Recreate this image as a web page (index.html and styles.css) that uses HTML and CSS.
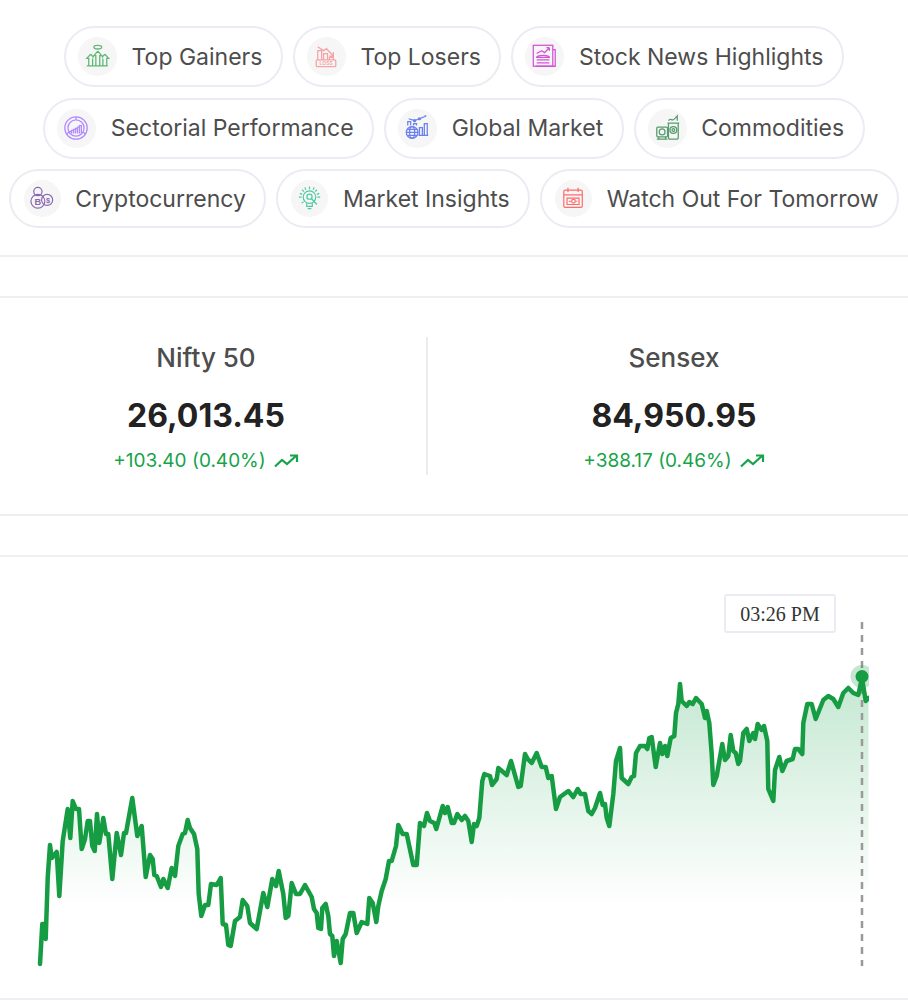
FILE: index.html
```html
<!DOCTYPE html>
<html lang="en">
<head>
<meta charset="utf-8">
<title>Market Overview</title>
<link rel="stylesheet" href="styles.css">
</head>
<body>
<main class="page">
  <nav class="chips">
    <a class="chip"><span class="chip-icon"><svg class="ico ico-gainers" viewBox="0 0 40 40"><ellipse cx="20.3" cy="10.500" rx="4" ry="1.800"/><path d="M9 29.500h21.500M20.300 14.500l-4 4.500h2v10.500M20.300 14.500l4 4.500h-2v10.500M13 17.500l-4 4.500h2v7.500M13 17.500l3 3.500M15 22v7.500M27.500 17.500l4 4.500h-2v7.500M27.500 17.500l-3 3.500M25.500 22v7.500"/></svg></span><span class="chip-label">Top Gainers</span></a>
    <a class="chip"><span class="chip-icon"><svg class="ico ico-losers" viewBox="0 0 40 40"><rect x="9.500" y="23.500" width="20" height="7" rx="1"/><path d="M11 23.500V14h4v9.500M17 23.500V17h4v6.500M23 23.500V21h4v2.500M11 10l6 4 3-2 7 7.500M27 15.500v4h-4"/><text class="ico-text" x="19.500" y="29">LOSS</text></svg></span><span class="chip-label">Top Losers</span></a>
    <a class="chip"><span class="chip-icon"><svg class="ico ico-news" viewBox="0 0 40 40"><rect x="8.500" y="8.500" width="20" height="21.500"/><path d="M28.500 13H31v17H11M12 17l5-3 3 2 5-5M25 11v3M22 11h3M12 21c0-3 13-3 13 0zM12 23.500h13M12 26.500h13"/></svg></span><span class="chip-label">Stock News Highlights</span></a>
    <a class="chip"><span class="chip-icon"><svg class="ico ico-sector" viewBox="0 0 40 40"><circle cx="19.500" cy="19.500" r="11.500"/><circle cx="19.500" cy="19.500" r="8.300"/><path d="M19.500 8v3M9.500 25.500l2.800-1.600M29.500 25.500l-2.800-1.600M13 25v-2h2v2M15 25v-3h2v3M17 25v-4h2v4M19 25v-5h2v5M21 25v-6.500h2v6.500M23 25v-8h2v8"/></svg></span><span class="chip-label">Sectorial Performance</span></a>
    <a class="chip"><span class="chip-icon"><svg class="ico ico-global" viewBox="0 0 40 40"><circle cx="14.500" cy="24" r="6"/><ellipse cx="14.500" cy="24" rx="2.600" ry="6"/><path d="M8.500 24h12M9.500 21h10M9.500 27h10M10 17v-4h3v4M16 17v-2h3v2M22 27v-8h3v8h-3M27 27V15h3v12h-3M21 27h10M11 10l6 2 5-2 7-3M29 7l-2 .2"/><circle cx="17" cy="12" r="1"/><circle cx="22" cy="10" r="1"/></svg></span><span class="chip-label">Global Market</span></a>
    <a class="chip"><span class="chip-icon"><svg class="ico ico-commod" viewBox="0 0 40 40"><rect x="9" y="18.500" width="11" height="10" rx="1"/><circle cx="14.500" cy="23.500" r="3"/><path d="M9 31h11M11 28.500v2.500M18 28.500v2.500M20 14.500h12M21 14.500v15a1.500 1.500 0 0 0 1.500 1.500h7a1.500 1.500 0 0 0 1.500-1.500v-15M21 12c2-3 3 0 5-1s3-3 4-4v5"/><circle cx="26" cy="21.500" r="3.500"/><circle cx="26" cy="21.500" r="1.400"/></svg></span><span class="chip-label">Commodities</span></a>
    <a class="chip chip-sm"><span class="chip-icon"><svg class="ico ico-crypto" viewBox="0 0 40 40"><circle cx="15" cy="12.500" r="4.500"/><circle cx="25" cy="21.500" r="6"/><circle cx="15" cy="23" r="7.500"/><text class="ico-text ico-text-lg" x="15" y="26.500">B</text><text class="ico-text ico-text-md" x="26" y="24.500">$</text></svg></span><span class="chip-label">Cryptocurrency</span></a>
    <a class="chip chip-sm"><span class="chip-icon"><svg class="ico ico-insight" viewBox="0 0 40 40"><circle cx="20" cy="18.500" r="6.800"/><circle cx="20" cy="18" r="2.800"/><path d="M17 25v3.500h6V25M18 31h4M22 20l6 6.500M20 7v3M15 8l1 2.500M25 8l-1 2.500M12 10.500l2 2M28 10.500l-2 2M9.500 14.500l2.500 1M30.500 14.500l-2.500 1M8.500 18.500h3M31.500 18.500h-3M11.500 25l2-1.500"/></svg></span><span class="chip-label">Market Insights</span></a>
    <a class="chip chip-sm"><span class="chip-icon"><svg class="ico ico-watch" viewBox="0 0 40 40"><rect x="9.500" y="11" width="20" height="18.500" rx="1.500"/><path d="M9.500 16h20M14 8.500V13M25 8.500V13M13 19.500h13v7H13z"/><circle cx="20" cy="23" r="2"/><path d="M15 23h2M23 23h1"/></svg></span><span class="chip-label">Watch Out For Tomorrow</span></a>
  </nav>

  <div class="spacer"></div>

  <section class="stats">
    <article class="stat stat-left">
      <h2 class="stat-name">Nifty 50</h2>
      <p class="stat-value">26,013.45</p>
      <p class="stat-change">+103.40 (0.40%)<svg class="trend" viewBox="0 0 25 14"><path d="M1 12.500l7-6.500 5 4 9.500-8.500M16 1.500h7v6.500"/></svg></p>
    </article>
    <article class="stat stat-right">
      <h2 class="stat-name">Sensex</h2>
      <p class="stat-value">84,950.95</p>
      <p class="stat-change">+388.17 (0.46%)<svg class="trend" viewBox="0 0 25 14"><path d="M1 12.500l7-6.500 5 4 9.500-8.500M16 1.500h7v6.500"/></svg></p>
    </article>
  </section>

  <div class="spacer"></div>

  <section class="chart">
    <svg class="plot" viewBox="0 556 908 441" aria-hidden="true">
      <defs>
        <linearGradient id="area" gradientUnits="userSpaceOnUse" x1="0" y1="680" x2="0" y2="905">
          <stop offset="0" stop-color="#16a34a" stop-opacity=".25"/>
          <stop offset="1" stop-color="#16a34a" stop-opacity="0"/>
        </linearGradient>
        <clipPath id="plotclip"><rect x="0" y="556" width="869" height="441"/></clipPath>
      </defs>
      <g clip-path="url(#plotclip)">
        <path class="area" d="M40 963L42.300 923 44 923 45.700 938 47.700 877 50 844 51.700 857 56.700 851 59.300 895 62.700 840 67.700 808 70.300 837 72.700 800 76 808 79 808 81.700 848 85 838 87.700 820 90 820 92.300 845 94.700 850 97 813 99.300 842 103.300 817 106 833 108.300 833 112.300 878 116.700 832 121 854 124 832 126 832 132.300 797 137.300 835 141.700 825 145.700 876 150 854 152.700 858 154.300 874 156.700 875 161 886 163.300 878 167.700 887 171.700 867 175 875 178.300 845 182.700 833 185 832 187.700 819 190 827 194 833 197.300 848 198.700 893 201.300 915 205 904 208.300 904 211 883 216.700 884 220.700 877 222.700 923 226 924 228.300 944 230.700 945 235 920 240 916 242.700 899 247.300 905 250 922 256.700 928 263.300 892 267.300 906 272.300 878 276 885 278.700 870 283.300 893 285.700 917 288.300 915 291.700 882 296 893 300 893 305 884 311.700 896 314 908 316.700 912 318.300 927 321 928 322.300 907 325.700 903 328.300 915 330 933 332.300 935 334 955 336.700 940 340.700 962 342.700 938 345.700 933 350 912 353.300 912 356.700 932 361.700 921 367.300 923 369.300 897 372.700 902 376.300 921 378.300 905 381.700 890 385.700 878 389 860 391.700 860 396 845 398.300 824 402.700 833 406.700 833 413.300 864 416.700 864 420 822 424 825 427 812 430 820 434.300 822 436.300 828 442.700 805 445 812 447.700 806 451.700 822 454 822 457.300 813 461.700 819 465 815 468.300 820 471.700 841 474 823 476.700 825 479.300 817 482.300 780 484.300 773 490 775 492 784 496.700 778 498.300 767 506.700 774 511 760 518.300 786 520.700 785 525 753 527.700 758 531.700 762 536.700 752 541.700 766 545.700 766 548.300 777 551.700 775 556 808 560 796 568.300 790 573.300 796 577.700 788 580.700 793 585 793 588.300 810 591.700 813 595 807 600 792 602.700 804 605 803 606.700 817 609.300 825 613.300 793 616 760 620 747 621.700 777 628.300 783 631.700 776 634 775 636 752 640 745 645 745 647.300 748 649.300 737 651.700 736 655.700 766 660 742 662.300 753 665 745 667.300 755 670.700 737 674.300 735 676 712 678.300 703 680 683 681.700 700 686.700 705 689.300 701 692.700 703 696 697 701.700 703 705 717 706.700 710 709.300 722 711.700 753 713.300 784 716.700 775 722.300 743 725 759 728.300 755 730.700 734 733.300 750 735.700 752 738.300 763 740 760 743.300 732 746.700 728 749.300 740 753.300 732 755 738 757.700 723 761.700 729 764 725 767.300 740 768.300 788 773.300 800 775 769 779.300 756 782.300 770 786.700 760 792.700 758 795 748 798.300 748 802.300 753 803.300 722 807.300 703 811.700 703 815.700 718 823.300 699 828.300 695 833.300 698 838.300 706 843.300 692 848.300 687 853.300 692 858.300 694 862 677 865.700 700 868.500 697V965H40Z"/>
        <line class="cursor" x1="862" y1="621" x2="862" y2="965"/>
        <circle class="halo" cx="862" cy="675.500" r="11.500"/>
        <path class="line" d="M40 963L42.300 923 44 923 45.700 938 47.700 877 50 844 51.700 857 56.700 851 59.300 895 62.700 840 67.700 808 70.300 837 72.700 800 76 808 79 808 81.700 848 85 838 87.700 820 90 820 92.300 845 94.700 850 97 813 99.300 842 103.300 817 106 833 108.300 833 112.300 878 116.700 832 121 854 124 832 126 832 132.300 797 137.300 835 141.700 825 145.700 876 150 854 152.700 858 154.300 874 156.700 875 161 886 163.300 878 167.700 887 171.700 867 175 875 178.300 845 182.700 833 185 832 187.700 819 190 827 194 833 197.300 848 198.700 893 201.300 915 205 904 208.300 904 211 883 216.700 884 220.700 877 222.700 923 226 924 228.300 944 230.700 945 235 920 240 916 242.700 899 247.300 905 250 922 256.700 928 263.300 892 267.300 906 272.300 878 276 885 278.700 870 283.300 893 285.700 917 288.300 915 291.700 882 296 893 300 893 305 884 311.700 896 314 908 316.700 912 318.300 927 321 928 322.300 907 325.700 903 328.300 915 330 933 332.300 935 334 955 336.700 940 340.700 962 342.700 938 345.700 933 350 912 353.300 912 356.700 932 361.700 921 367.300 923 369.300 897 372.700 902 376.300 921 378.300 905 381.700 890 385.700 878 389 860 391.700 860 396 845 398.300 824 402.700 833 406.700 833 413.300 864 416.700 864 420 822 424 825 427 812 430 820 434.300 822 436.300 828 442.700 805 445 812 447.700 806 451.700 822 454 822 457.300 813 461.700 819 465 815 468.300 820 471.700 841 474 823 476.700 825 479.300 817 482.300 780 484.300 773 490 775 492 784 496.700 778 498.300 767 506.700 774 511 760 518.300 786 520.700 785 525 753 527.700 758 531.700 762 536.700 752 541.700 766 545.700 766 548.300 777 551.700 775 556 808 560 796 568.300 790 573.300 796 577.700 788 580.700 793 585 793 588.300 810 591.700 813 595 807 600 792 602.700 804 605 803 606.700 817 609.300 825 613.300 793 616 760 620 747 621.700 777 628.300 783 631.700 776 634 775 636 752 640 745 645 745 647.300 748 649.300 737 651.700 736 655.700 766 660 742 662.300 753 665 745 667.300 755 670.700 737 674.300 735 676 712 678.300 703 680 683 681.700 700 686.700 705 689.300 701 692.700 703 696 697 701.700 703 705 717 706.700 710 709.300 722 711.700 753 713.300 784 716.700 775 722.300 743 725 759 728.300 755 730.700 734 733.300 750 735.700 752 738.300 763 740 760 743.300 732 746.700 728 749.300 740 753.300 732 755 738 757.700 723 761.700 729 764 725 767.300 740 768.300 788 773.300 800 775 769 779.300 756 782.300 770 786.700 760 792.700 758 795 748 798.300 748 802.300 753 803.300 722 807.300 703 811.700 703 815.700 718 823.300 699 828.300 695 833.300 698 838.300 706 843.300 692 848.300 687 853.300 692 858.300 694 862 677 865.700 700 868.500 697"/>
        <circle class="dot" cx="862" cy="675.500" r="6.500"/>
      </g>
    </svg>
    <div class="tooltip">03:26 PM</div>
  </section>
</main>
</body>
</html>
```

FILE: styles.css
```css
* { box-sizing: border-box; }

html, body {
  margin: 0;
  background: #fff;
}

body {
  font-family: Inter, "Liberation Sans", sans-serif;
  color: #4d4d4d;
}

.page {
  width: 908px;
}

.chips {
  display: flex;
  flex-wrap: wrap;
  justify-content: center;
  gap: 10.5px 10px;
  padding: 26px 0 27px;
  border-bottom: 2px solid #eeeef3;
}

.chip {
  display: flex;
  align-items: center;
  gap: 14.5px;
  padding: 9px 18.5px 9px 12px;
  border: 2px solid #ecebf3;
  border-radius: 31px;
  background: #fff;
}

.chip-icon {
  flex: none;
  width: 39px;
  height: 39px;
  border-radius: 50%;
  background: #f6f6f7;
}

.chip-sm {
  padding-left: 13px;
}

.chip-sm .chip-icon {
  width: 37px;
  height: 37px;
}

.chip-label {
  font-size: 23px;
  line-height: 30px;
  white-space: nowrap;
}

.ico {
  display: block;
  width: 100%;
  height: 100%;
  fill: none;
  stroke: currentColor;
  stroke-width: 1.3;
}

.ico-text {
  fill: currentColor;
  stroke: none;
  font-family: "Liberation Sans", sans-serif;
  font-size: 5px;
  font-weight: 700;
  text-anchor: middle;
}

.ico-text-lg { font-size: 10px; }
.ico-text-md { font-size: 8px; }

.ico-gainers { color: #5cb873; }
.ico-losers { color: #f6a3a5; }
.ico-news { color: #d253d6; }
.ico-sector { color: #b18aff; }
.ico-global { color: #6b80ee; }
.ico-commod { color: #569c6c; }
.ico-crypto { color: #8a69ae; }
.ico-insight { color: #4ecb9f; }
.ico-watch { color: #ff6c6c; }

.spacer {
  height: 39px;
  border-bottom: 2px solid #eeeef3;
  box-sizing: content-box;
}

.stats {
  display: flex;
  padding: 39px 0;
  border-bottom: 2px solid #eeeef3;
}

.stat {
  display: flex;
  flex-direction: column;
  align-items: center;
  height: 138px;
}

.stat-left {
  width: 428px;
  padding-right: 14px;
  border-right: 2px solid #eaeaef;
}

.stat-right {
  flex: 1;
  padding-left: 12px;
}

.stat-name {
  margin: 3px 0 0;
  font-size: 26px;
  line-height: 36px;
  font-weight: 500;
  color: #4d4d4d;
}

.stat-value {
  margin: 19px 0 0;
  font-size: 32px;
  line-height: 42px;
  font-weight: 700;
  color: #222;
}

.stat-change {
  display: flex;
  align-items: center;
  gap: 8px;
  margin: 10px 0 0;
  font-size: 19px;
  line-height: 28px;
  color: #16a34a;
}

.trend {
  width: 25px;
  height: 14px;
  fill: none;
  stroke: #16a34a;
  stroke-width: 2.2;
}

.chart {
  position: relative;
  height: 443px;
  border-bottom: 2px solid #eeeef3;
}

.plot {
  display: block;
  width: 908px;
  height: 441px;
}

.area { fill: url(#area); }

.line {
  fill: none;
  stroke: #169c42;
  stroke-width: 4.5;
  stroke-linejoin: round;
  stroke-linecap: round;
}

.cursor {
  stroke: #999;
  stroke-width: 2.5;
  stroke-dasharray: 7 6;
}

.halo {
  fill: #169c42;
  fill-opacity: .25;
}

.dot { fill: #169c42; }

.tooltip {
  position: absolute;
  top: 37px;
  left: 724px;
  width: 112px;
  height: 39px;
  border: 2px solid #ecebf1;
  border-radius: 3px;
  background: #fff;
  font-family: "Liberation Serif", serif;
  font-size: 20px;
  line-height: 36px;
  text-align: center;
  color: #333;
}
```
